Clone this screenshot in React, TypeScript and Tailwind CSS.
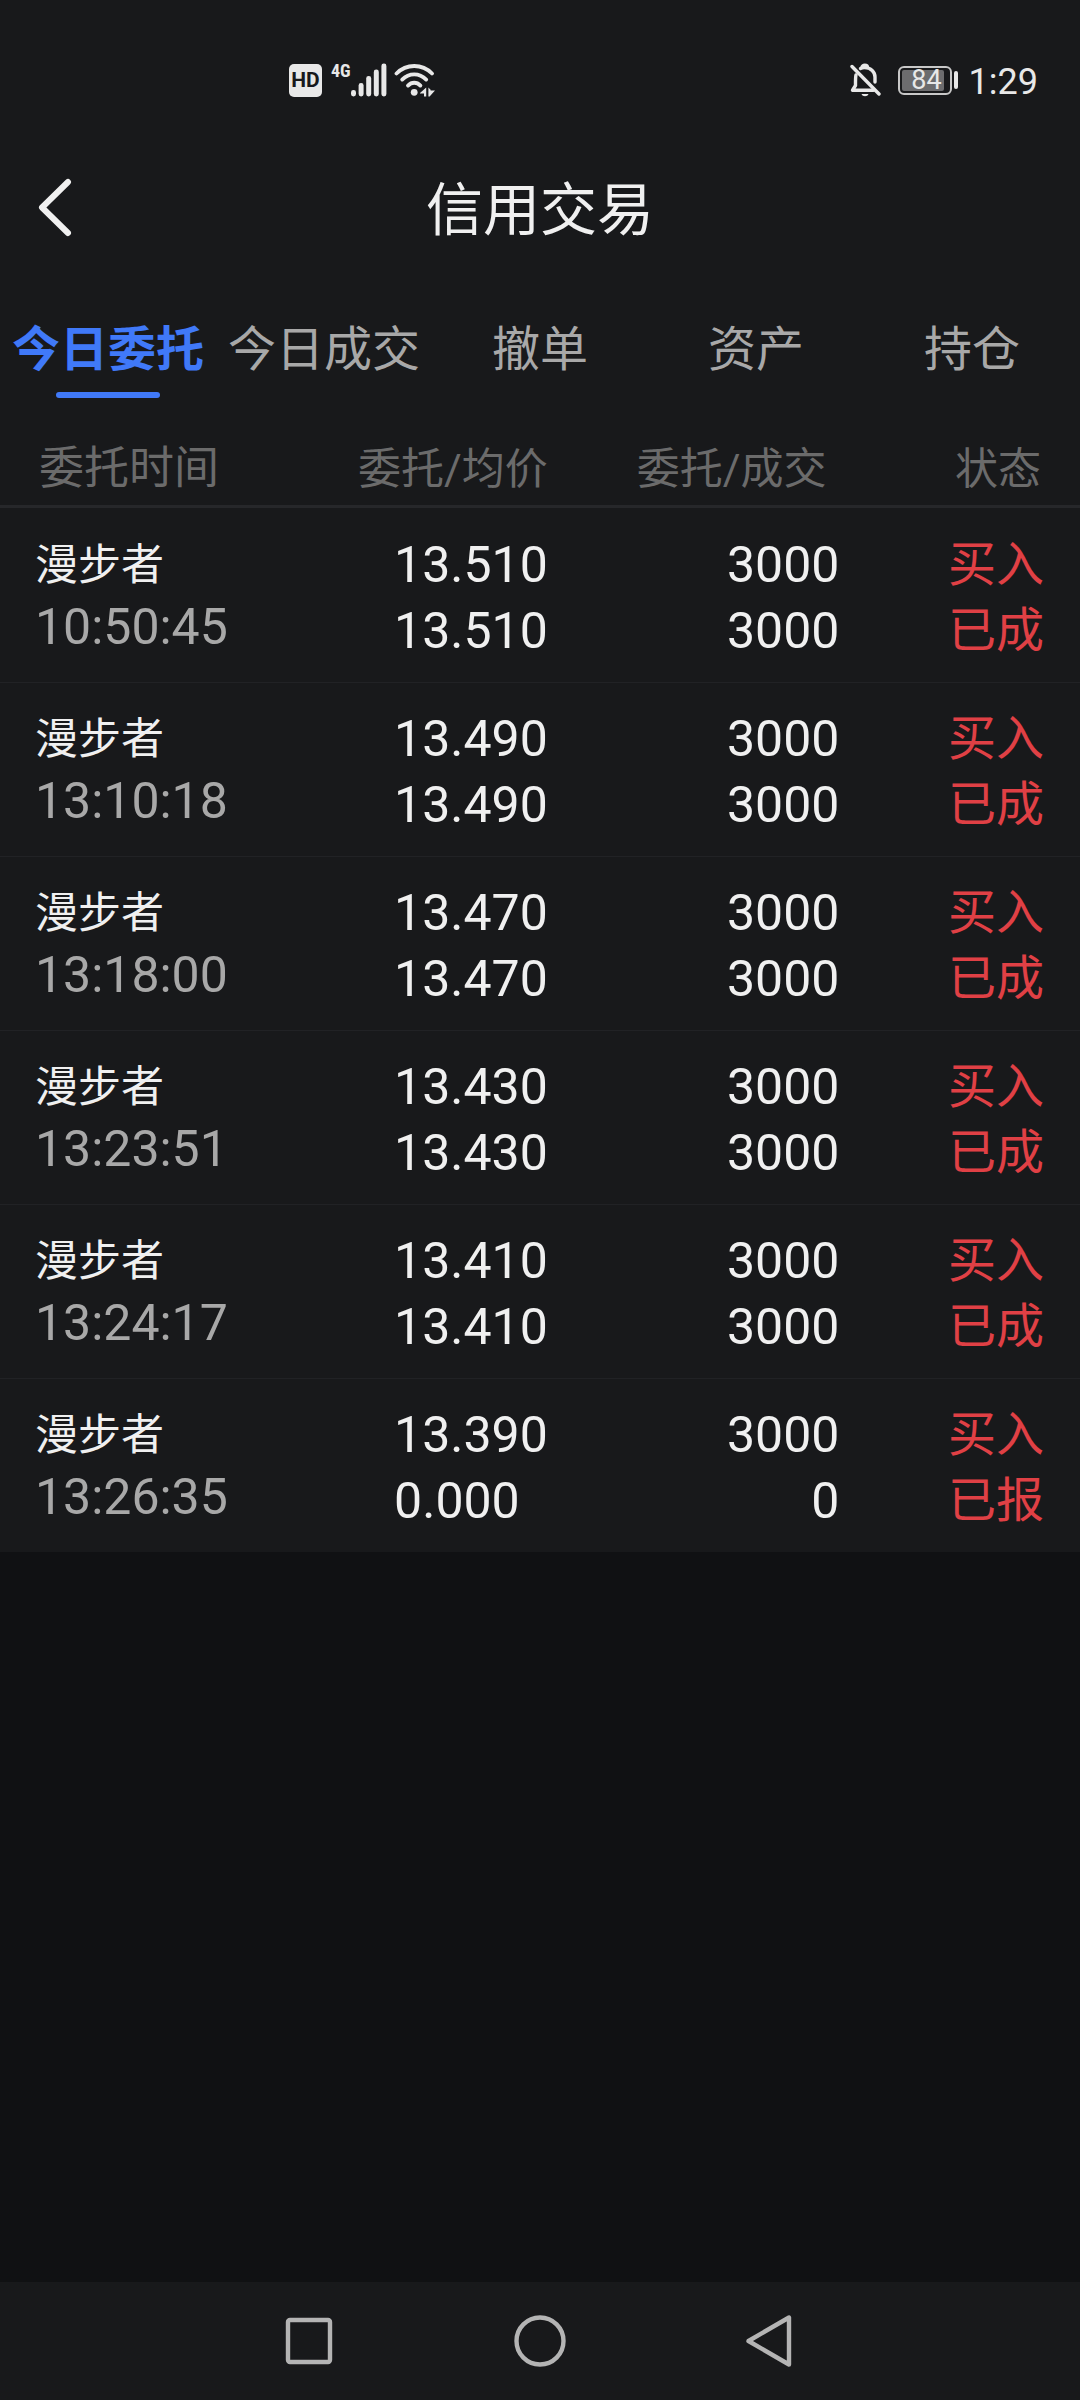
import { useState } from "react";

const TABS = ["今日委托", "今日成交", "撤单", "资产", "持仓"];

const ORDERS = [
  { name: "漫步者", time: "10:50:45", price: "13.510", avg: "13.510", qty: "3000", filled: "3000", side: "买入", status: "已成" },
  { name: "漫步者", time: "13:10:18", price: "13.490", avg: "13.490", qty: "3000", filled: "3000", side: "买入", status: "已成" },
  { name: "漫步者", time: "13:18:00", price: "13.470", avg: "13.470", qty: "3000", filled: "3000", side: "买入", status: "已成" },
  { name: "漫步者", time: "13:23:51", price: "13.430", avg: "13.430", qty: "3000", filled: "3000", side: "买入", status: "已成" },
  { name: "漫步者", time: "13:24:17", price: "13.410", avg: "13.410", qty: "3000", filled: "3000", side: "买入", status: "已成" },
  { name: "漫步者", time: "13:26:35", price: "13.390", avg: "0.000", qty: "3000", filled: "0", side: "买入", status: "已报" },
];

function StatusBar() {
  return (
    <div className="flex h-[160px] items-center justify-between pl-[289px] pr-[42px] text-[#e8e8e8]">
      <div className="flex items-center">
        <span className="flex h-[33px] w-[33px] items-center justify-center rounded-[5px] bg-[#e8e8e8] font-[Roboto] text-[21px] font-bold leading-none text-[#18191b]">
          HD
        </span>
        <span className="mb-[18px] ml-[9px] font-['Roboto_Condensed',Roboto] text-[18px] font-bold leading-none">4G</span>
        <svg width="36" height="34" viewBox="0 0 36 34" fill="currentColor" aria-hidden="true">
          <rect x="0" y="27" width="5" height="6.5" rx="2.4" />
          <rect x="7.6" y="20" width="5" height="13.5" rx="2.4" />
          <rect x="15.2" y="13" width="5" height="20.5" rx="2.4" />
          <rect x="22.8" y="6.5" width="5" height="27" rx="2.4" />
          <rect x="30.4" y="0.5" width="5" height="33" rx="2.4" />
        </svg>
        <svg className="ml-[7px]" width="42" height="34" viewBox="0 0 42 34" fill="none" stroke="currentColor" strokeWidth="3.8" strokeLinecap="round" aria-hidden="true">
          <path d="M2.5 10.5C12.5 0.5 28 0.5 38 10.5" />
          <path d="M8.2 16.6C15 9.6 25.4 9.6 32.2 16.6" />
          <path d="M14 22.6C17.6 18.8 22.8 18.8 26.4 22.6" />
          <circle cx="20.2" cy="29.3" r="3.4" fill="currentColor" stroke="none" />
          <path d="M26 30L32.2 24.5V33.5H30V30.6H26Z" fill="currentColor" stroke="none" />
          <path d="M34.4 24.5L36.6 26.7V27.4H41L35.6 33.5H34.4Z" fill="currentColor" stroke="none" />
        </svg>
      </div>
      <div className="flex items-center">
        <svg width="31" height="34" viewBox="0 0 31 34" fill="none" stroke="currentColor" strokeWidth="3.4" strokeLinecap="round" strokeLinejoin="round" aria-hidden="true">
          <path d="M2 3.5L29 31" />
          <path d="M6 12C5.4 14 5.5 19 5.5 22.5L2.5 27.2H23.5" />
          <path d="M10.5 5.4C12 4.6 13 4.6 14.5 4.6C21 4.6 25 9 25 14V19" />
          <path d="M12 4.5C12 1.4 17.5 1.4 17.5 4.5" />
          <path d="M11.5 31H18.5C17.5 34 12.5 34 11.5 31Z" fill="currentColor" stroke="none" />
        </svg>
        <div className="ml-[17px] flex h-[29px] w-[54px] rounded-[6px] border-2 border-[#c8c8c8] p-[2px]">
          <div className="flex w-[42px] items-center justify-end rounded-[2px] bg-[#6c6c6e] pr-[2px] font-[Roboto] text-[27px] leading-none">84</div>
        </div>
        <span className="ml-[2px] h-[18px] w-[4px] rounded-full bg-[#e8e8e8]" />
        <span className="ml-[11px] pt-[4px] font-[Roboto] text-[36px] leading-none">1:29</span>
      </div>
    </div>
  );
}

function NavBar() {
  return (
    <nav className="flex h-[118px] justify-center bg-[#18191b] text-[#b4b4b4]">
      <button aria-label="最近任务" className="flex w-[231px] items-center justify-center">
        <svg width="54" height="54" viewBox="0 0 54 54" fill="none" stroke="currentColor" strokeWidth="4.4">
          <rect x="6" y="6" width="42" height="42" rx="2" />
        </svg>
      </button>
      <button aria-label="主页" className="flex w-[231px] items-center justify-center">
        <svg width="54" height="54" viewBox="0 0 54 54" fill="none" stroke="currentColor" strokeWidth="4.4">
          <circle cx="27" cy="27" r="23.5" />
        </svg>
      </button>
      <button aria-label="返回" className="flex w-[231px] items-center justify-center">
        <svg width="54" height="54" viewBox="0 0 54 54" fill="none" stroke="currentColor" strokeWidth="4.4" strokeLinejoin="round">
          <path d="M45 3.5V50.5L4.5 27Z" />
        </svg>
      </button>
    </nav>
  );
}

export default function App() {
  const [tab, setTab] = useState(TABS[0]);

  return (
    <div className="flex min-h-screen flex-col bg-[#101113] font-[Roboto,'Noto_Sans_CJK_SC',sans-serif] text-[#f0f0f0]">
      <div className="bg-[#18191b]">
        <StatusBar />

        <header className="grid h-[96px] grid-cols-[1fr_auto_1fr] items-center px-[36px]">
          <button aria-label="返回" className="w-[40px]">
            <svg width="40" height="60" viewBox="0 0 40 60" fill="none" stroke="currentColor" strokeWidth="6" strokeLinecap="round" strokeLinejoin="round">
              <path d="M32 4L6 29.5L32 55" />
            </svg>
          </button>
          <h1 className="pt-[4px] text-[57px] leading-none">信用交易</h1>
        </header>

        <div role="tablist" className="flex h-[142px] items-end">
          {TABS.map((t) => (
            <button
              key={t}
              role="tab"
              aria-selected={tab === t}
              onClick={() => setTab(t)}
              className={`flex flex-1 flex-col items-center whitespace-nowrap text-[48px] leading-[64px] ${
                tab === t ? "font-bold text-[#4079f8]" : "text-[#a8a8a8]"
              }`}
            >
              {t}
              <span className={`mt-[10px] h-[6px] w-[104px] rounded-full ${tab === t ? "bg-[#4079f8]" : ""}`} />
            </button>
          ))}
        </div>

        <table className="w-full table-fixed border-separate border-spacing-0">
          <colgroup>
            <col className="w-[30%]" />
            <col className="w-[21%]" />
            <col className="w-[27%]" />
            <col className="w-[22%]" />
          </colgroup>
          <thead>
            <tr className="h-[110px] text-right text-[43px] leading-[60px] text-[#6b6b6b] *:border-b-[3px] *:border-[#26272a] *:pt-[34px]">
              <th className="pl-[39px] text-left text-[45px] font-normal">委托时间</th>
              <th className="whitespace-nowrap pr-[3px] font-normal">委托/均价</th>
              <th className="whitespace-nowrap pr-[16px] font-normal">委托/成交</th>
              <th className="pr-[39px] font-normal">状态</th>
            </tr>
          </thead>
          <tbody className="[&>tr:first-child>td]:border-transparent">
            {ORDERS.map((o) => (
              <tr key={o.time} className="h-[174px] text-right text-[50px] leading-[66px] *:border-t *:border-[#212225]">
                <td className="pl-[35px] text-left">
                  <div className="text-[43px] leading-[62px]">{o.name}</div>
                  <div className="text-[50px] leading-[62px] text-[#a8a8a8]">{o.time}</div>
                </td>
                <td className="pr-[3px] pt-[4px]">
                  <div className="inline-block text-left align-middle">
                    <div>{o.price}</div>
                    <div>{o.avg}</div>
                  </div>
                </td>
                <td className="pr-[3px] pt-[4px]">
                  <div>{o.qty}</div>
                  <div>{o.filled}</div>
                </td>
                <td className="pr-[36px] pt-[4px] text-[48px] text-[#e04045]">
                  <div>{o.side}</div>
                  <div>{o.status}</div>
                </td>
              </tr>
            ))}
          </tbody>
        </table>
      </div>

      <main className="flex-1" />
      <NavBar />
    </div>
  );
}
